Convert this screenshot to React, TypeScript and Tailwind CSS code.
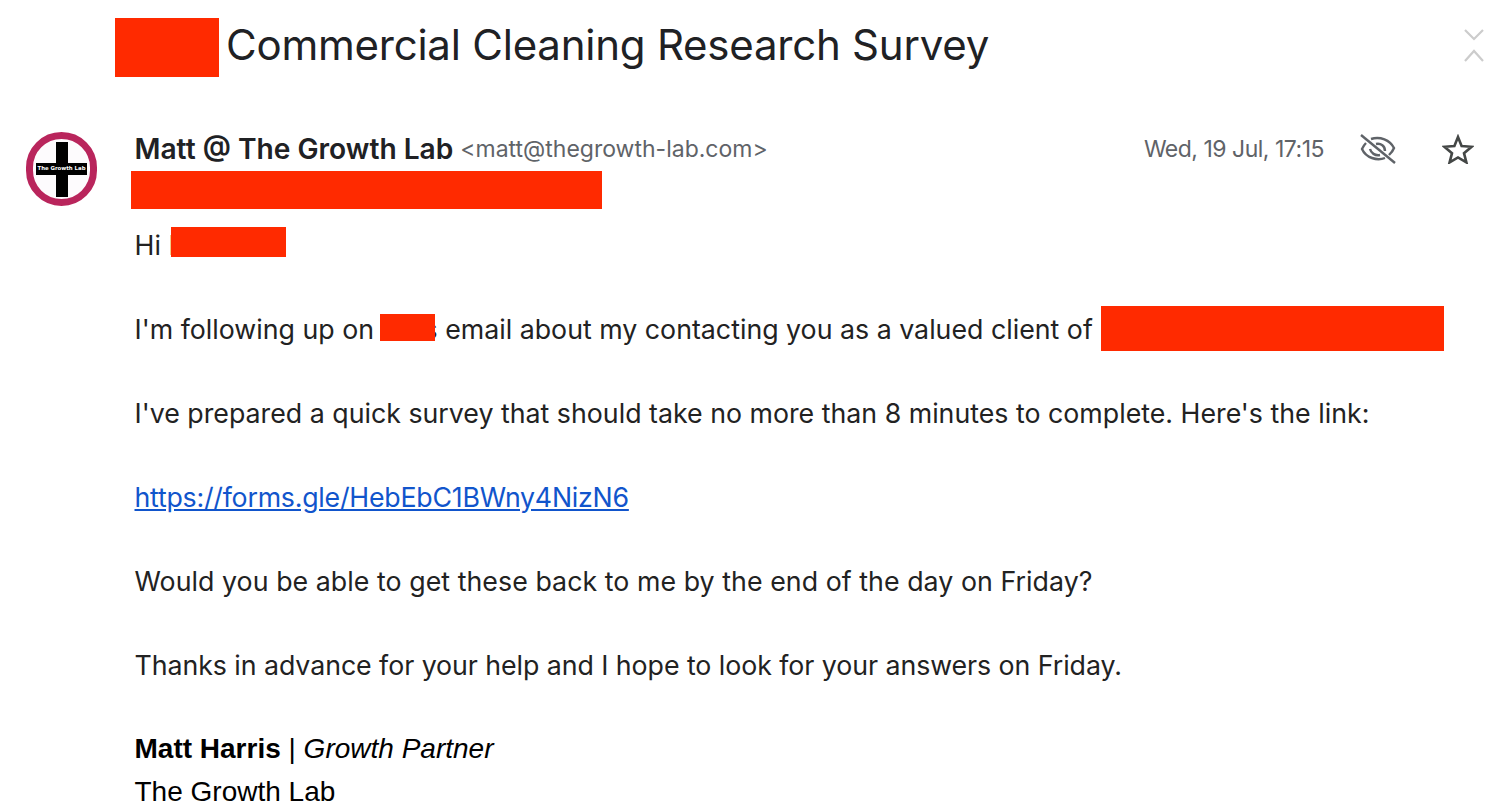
const sans = "font-['Inter',sans-serif]";

function Redact({ className }: { className: string }) {
  return <span className={`relative inline-block bg-[#ff2a00] align-top ${className}`} />;
}

function Avatar() {
  return (
    <div className="relative w-[71px] h-[74px] shrink-0 rounded-full border-[7px] border-[#b9255c] bg-[#fdfbfd] flex items-center justify-center">
      <div className="absolute w-[12px] h-[55px] bg-black" />
      <div className="relative w-[51px] h-[12px] bg-black flex items-center justify-center">
        <span className="text-[5.4px] leading-none font-bold text-white font-['DejaVu_Sans',sans-serif] whitespace-nowrap">The Growth Lab</span>
      </div>
    </div>
  );
}

function HiddenEye() {
  return (
    <svg width="38" height="32" viewBox="0 0 38 32" fill="none" stroke="#5f6368" strokeWidth="2.4" className="ml-[35px]">
      <path d="M2 2 L36 30" />
      <path d="M12 6 C 21 3 31 7 35 15 C 34 18 32 20 30 22" />
      <path d="M7 10 C 5 12 4 14 3 16 C 7 25 18 28 26 25" />
      <path d="M17 11 C 22 10 26 13 26 18" />
      <path d="M11 16 C 12 20 16 23 21 22" />
    </svg>
  );
}

export default function App() {
  return (
    <div className={`w-[1489px] h-[812px] overflow-hidden bg-white ${sans}`}>
      <div className="flex items-start h-[132px] pl-[115px] pt-[18px] pr-[5px]">
        <Redact className="w-[104px] h-[59px]" />
        <h1 className="ml-[7px] mt-[1px] text-[42px] leading-[52px] text-[#202124] tracking-[-0.23px] whitespace-nowrap">Commercial Cleaning Research Survey</h1>
        <svg width="20" height="33" viewBox="0 0 20 33" fill="none" stroke="#cccccc" strokeWidth="2.2" className="ml-auto mt-[11px]">
          <path d="M1 1 L10 10 L19 1" />
          <path d="M1 32 L10 22 L19 32" />
        </svg>
      </div>
      <div className="flex pl-[26px]">
        <Avatar />
        <div className="ml-[37.5px] flex-1">
          <div className="flex items-center h-[34px] pr-[15px]">
            <span className="text-[28.15px] font-semibold text-[#202124] whitespace-nowrap">Matt @ The Growth Lab</span>
            <span className="ml-[7px] text-[23px] text-[#5f6368] whitespace-nowrap">&lt;matt@thegrowth-lab.com&gt;</span>
            <span className="ml-auto text-[23px] text-[#5f6368] whitespace-nowrap tracking-[-0.5px]">Wed, 19 Jul, 17:15</span>
            <HiddenEye />
            <svg width="32" height="30" viewBox="0 0 32 30" fill="none" stroke="#444746" strokeWidth="2.6" className="ml-[45px]">
              <path d="M16 3 L19.6 12 L29.6 12.8 L22 19.2 L24.4 28.4 L16 23.4 L7.6 28.4 L10 19.2 L2.4 12.8 L12.4 12 Z" />
            </svg>
          </div>
          <div className="-ml-[3.5px] mt-[5px] h-[38px]">
            <Redact className="w-[471px] h-[38px]" />
          </div>
          <div className="mt-[15px] text-[26.75px] leading-[42px] text-[#222222]">
            <p className="h-[84px] whitespace-nowrap">
              Hi M<Redact className="w-[115px] h-[30px] mt-[3px] -ml-[22px]" />
            </p>
            <p className="h-[84px] whitespace-nowrap">
              I'm following up on <Redact className="w-[55px] h-[27px] mt-[6px] -ml-[2px]" /><span className="-ml-[11px]">s</span> email about my contacting you as a valued client of <Redact className="w-[343px] h-[45px] -mt-[2px] ml-[1px]" />
            </p>
            <p className="h-[84px] whitespace-nowrap">I've prepared a quick survey that should take no more than 8 minutes to complete. Here's the link:</p>
            <p className="h-[84px] whitespace-nowrap">
              <a href="#" className="text-[#1155cc] underline tracking-[-0.24px]">https://forms.gle/HebEbC1BWny4NizN6</a>
            </p>
            <p className="h-[84px] whitespace-nowrap tracking-[0.05px]">Would you be able to get these back to me by the end of the day on Friday?</p>
            <p className="h-[84px] whitespace-nowrap tracking-[-0.06px]">Thanks in advance for your help and I hope to look for your answers on Friday.</p>
            <div className="font-['Liberation_Sans',sans-serif] text-black text-[28px] whitespace-nowrap">
              <p><b>Matt Harris</b> | <i>Growth Partner</i></p>
              <p className="mt-[1px]">The Growth Lab</p>
            </div>
          </div>
        </div>
      </div>
    </div>
  );
}
